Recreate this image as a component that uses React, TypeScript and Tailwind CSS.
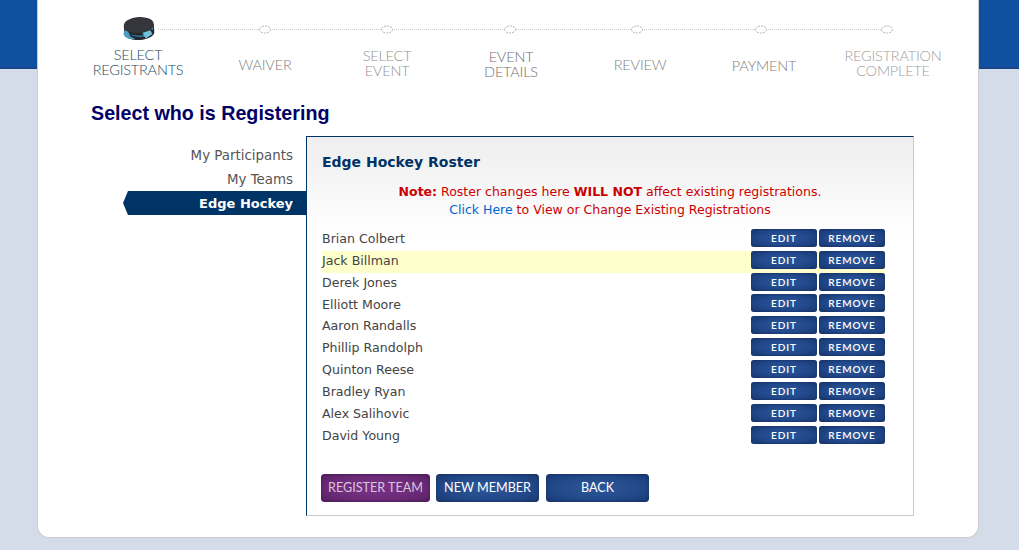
const steps = [
  { lines: ['SELECT', 'REGISTRANTS'], w: 'w-[120px]', color: 'text-[#234a66]', shift: 'mt-[-3px]' },
  { lines: ['WAIVER'], w: 'w-[134px]', color: 'text-[#808080]', shift: 'mt-[3px]' },
  { lines: ['SELECT', 'EVENT'], w: 'w-[110px]', color: 'text-[#949494]', shift: 'mt-[-1px]' },
  { lines: ['EVENT', 'DETAILS'], w: 'w-[138px]', color: 'text-[#707070]', shift: 'mt-[2px]' },
  { lines: ['REVIEW'], w: 'w-[120px]', color: 'text-[#828282]', shift: 'mt-[3px]' },
  { lines: ['PAYMENT'], w: 'w-[128px]', color: 'text-[#808080]', shift: 'mt-[4px]' },
  { lines: ['REGISTRATION', 'COMPLETE'], w: 'w-[130px]', color: 'text-[#a0a0a0]', shift: 'mt-[-1px]' },
]

const roster = [
  'Brian Colbert',
  'Jack Billman',
  'Derek Jones',
  'Elliott Moore',
  'Aaron Randalls',
  'Phillip Randolph',
  'Quinton Reese',
  'Bradley Ryan',
  'Alex Salihovic',
  'David Young',
]

function StepTrack() {
  const dots = [187, 309, 432, 559, 683, 809]
  return (
    <svg width="860" height="46" viewBox="0 0 860 46" className="block">
      <line x1="80" y1="29.5" x2="805" y2="29.5" stroke="#c8c8c8" strokeWidth="1" strokeDasharray="1 1" />
      {dots.map((x) => (
        <ellipse key={x} cx={x} cy="29.5" rx="5.5" ry="3.5" fill="#fff" stroke="#b4b4b4" strokeWidth="1" strokeDasharray="2 1" />
      ))}
      {/* puck */}
      <g transform="rotate(-4 61 28)">
        <path d="M46 25 v8 c0 4 7 7 15 7 s15 -3 15 -7 v-8 z" fill="#26272b" />
        <path d="M47 29 l3 2 l2 5 l5 3 c-6 0 -11 -2 -12 -6 z" fill="#4a9cc4" />
        <path d="M52 34 c5 1 9 2 13 1 l2 2 c-5 1 -11 0 -15 -3 z" fill="#2f6f92" />
        <path d="M64 33 l8 -2 l2 4 l-7 4 z" fill="#6fc0de" />
        <path d="M70 29 l5 -3 l0 5 z" fill="#3d87ad" />
        <ellipse cx="61" cy="25" rx="15" ry="8" fill="#35363b" />
      </g>
    </svg>
  )
}

function RowButton({ label }: { label: string }) {
  return (
    <button className="w-[66px] h-[18px] rounded-[3px] bg-[radial-gradient(ellipse_at_center,#2c5799_0%,#21488a_55%,#18356c_100%)] shadow-[inset_0_0_2px_#14305f] text-white text-[10px] font-semibold tracking-[0.9px] leading-[18px] font-['Lato',sans-serif]">
      {label}
    </button>
  )
}

function ActionButton({ label, w, purple }: { label: string; w: string; purple?: boolean }) {
  return (
    <button
      className={`${w} h-[28px] rounded-[4px] text-[12.6px] font-['Lato',sans-serif] leading-[28px] ${
        purple
          ? 'bg-[radial-gradient(ellipse_at_center,#7a3488_0%,#6b2a78_60%,#54205f_100%)] shadow-[inset_0_0_3px_#451a50] text-[#d9c5de]'
          : 'bg-[radial-gradient(ellipse_at_center,#2c5799_0%,#234a8b_55%,#1a3872_100%)] shadow-[inset_0_0_3px_#14305f] text-white'
      }`}
    >
      {label}
    </button>
  )
}

export default function App() {
  return (
    <div className="h-[550px] overflow-hidden bg-[linear-gradient(#0f50a0_67px,#1b4586_67px,#1b4586_69px,#d5dce9_69px)]">
      <div className="ml-[37px] w-[942px] h-[538px] bg-white border-x border-b border-[#cccccc] rounded-b-[12px] font-['DejaVu_Sans',sans-serif]">
        <div className="pl-[40px]">
          <StepTrack />
          <div className="flex h-[34px] items-center font-['Lato',sans-serif] font-light text-[14.5px] leading-[15px] tracking-[-0.2px]">
            {steps.map((s) => (
              <div key={s.lines[0] + s.w} className={`${s.w} ${s.color} ${s.shift} text-center shrink-0`}>
                {s.lines[0]}
                {s.lines[1] && <br />}
                {s.lines[1]}
              </div>
            ))}
          </div>
        </div>

        <h1 className="ml-[53px] mt-[20px] h-[26px] text-[19.7px] leading-[26px] font-bold text-[#000066] font-['Liberation_Sans',sans-serif]">
          Select who is Registering
        </h1>

        <div className="flex mt-[10px]">
          <div className="ml-[85px] w-[183px] pt-[7px] text-[13.4px] text-[#555555] text-right">
            <div className="h-[24px] leading-[26px] pr-[13px]">My Participants</div>
            <div className="h-[24px] leading-[26px] pr-[13px]">My Teams</div>
            <div className="h-[24px] leading-[26px] pr-[13px] text-[13px] font-bold text-white bg-[#003366] [clip-path:polygon(5px_0,100%_0,100%_100%,5px_100%,0_50%)]">
              Edge Hockey
            </div>
          </div>

          <div className="w-[608px] h-[380px] border-t border-l border-t-[#003366] border-l-[#003366] border-r border-b border-r-[#cccccc] border-b-[#cccccc] bg-[linear-gradient(#eeeeee_0px,#ffffff_100px)] pl-[15px]">
            <h2 className="mt-[16px] h-[18px] text-[14px] leading-[18px] font-bold text-[#003366]">Edge Hockey Roster</h2>
            <div className="mt-[12px] pr-[15px] text-center text-[12.5px] leading-[18px] text-[#cc0000]">
              <p>
                <b>Note:</b> Roster changes here <b>WILL NOT</b> affect existing registrations.
              </p>
              <p>
                <span className="text-[#0066cc]">Click Here</span> to View or Change Existing Registrations
              </p>
            </div>

            <div className="mt-[10px] w-[563px]">
              {roster.map((name, i) => (
                <div
                  key={name}
                  className={`flex items-center justify-between h-[21.85px] pb-[2px] text-[12.6px] text-[#444444] ${
                    i === 1 ? 'bg-[#ffffcc]' : ''
                  }`}
                >
                  <span className="mt-[1px]">{name}</span>
                  <div className="flex gap-[2px] mb-[2px]">
                    <RowButton label="EDIT" />
                    <RowButton label="REMOVE" />
                  </div>
                </div>
              ))}
            </div>

            <div className="flex mt-[27px] -ml-[1px]">
              <ActionButton label="REGISTER TEAM" w="w-[109px]" purple />
              <div className="w-[6px]" />
              <ActionButton label="NEW MEMBER" w="w-[103px]" />
              <div className="w-[7px]" />
              <ActionButton label="BACK" w="w-[103px]" />
            </div>
          </div>
        </div>
      </div>
    </div>
  )
}
